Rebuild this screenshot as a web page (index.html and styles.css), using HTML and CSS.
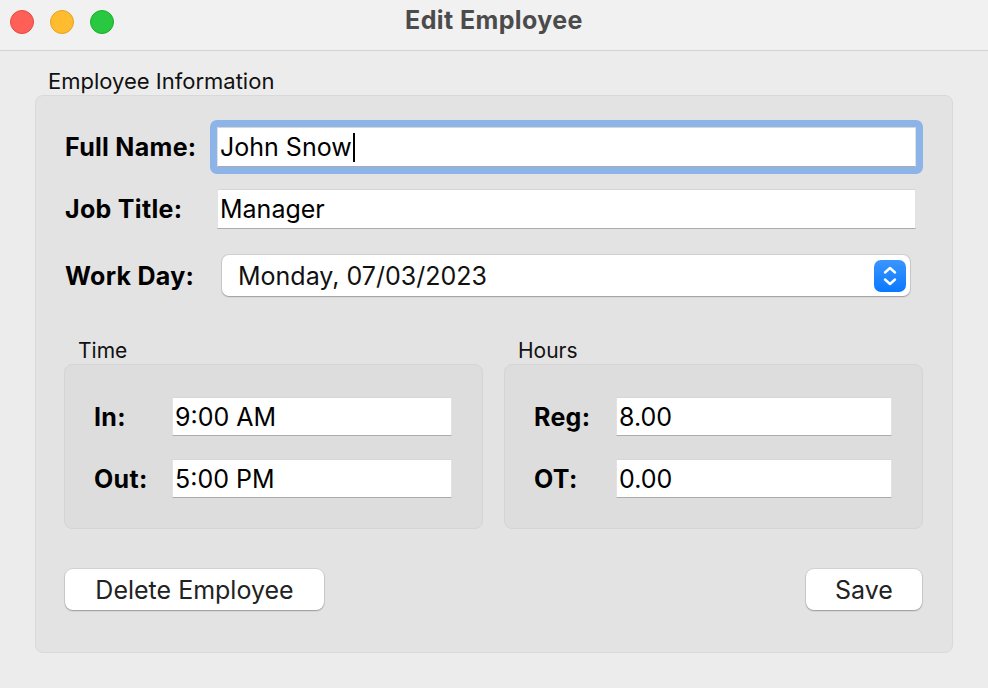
FILE: index.html
```html
<!DOCTYPE html>
<html>
<head>
<meta charset="utf-8">
<title>Edit Employee</title>
<link rel="stylesheet" href="styles.css">
</head>
<body>
<div class="window">
  <div class="titlebar">
    <div class="lights">
      <span class="light red"></span>
      <span class="light yellow"></span>
      <span class="light green"></span>
    </div>
    <div class="title">Edit Employee</div>
  </div>
  <div class="body">
    <div class="group-label">Employee Information</div>
    <div class="group">
      <div class="form">
        <div class="row row-name">
          <div class="label">Full Name:</div>
          <div class="focus-ring"><div class="field">John Snow<span class="caret"></span></div></div>
        </div>
        <div class="row row-title">
          <div class="label">Job Title:</div>
          <div class="field">Manager</div>
        </div>
        <div class="row row-day">
          <div class="label">Work Day:</div>
          <div class="popup">
            <span class="popup-text">Monday, 07/03/2023</span>
            <span class="stepper">
              <svg width="32" height="32" viewBox="0 0 32 32">
                <path d="M11 12.5 L16 8 L21 12.5" fill="none" stroke="#fff" stroke-width="2.4" stroke-linecap="round" stroke-linejoin="round"/>
                <path d="M11 19.5 L16 24 L21 19.5" fill="none" stroke="#fff" stroke-width="2.4" stroke-linecap="round" stroke-linejoin="round"/>
              </svg>
            </span>
          </div>
        </div>
      </div>
      <div class="subgroups">
        <div class="sub">
          <div class="sub-label">Time</div>
          <div class="sub-box sub-time">
            <div class="sub-label-cell">In:</div>
            <div class="field small">9:00 AM</div>
            <div class="sub-label-cell">Out:</div>
            <div class="field small">5:00 PM</div>
          </div>
        </div>
        <div class="sub">
          <div class="sub-label">Hours</div>
          <div class="sub-box sub-hours">
            <div class="sub-label-cell">Reg:</div>
            <div class="field small">8.00</div>
            <div class="sub-label-cell">OT:</div>
            <div class="field small">0.00</div>
          </div>
        </div>
      </div>
      <div class="buttons">
        <button class="btn btn-delete">Delete Employee</button>
        <button class="btn btn-save">Save</button>
      </div>
    </div>
  </div>
</div>
</body>
</html>
```
FILE: styles.css
```css
* { box-sizing: border-box; }
html, body {
  margin: 0;
  padding: 0;
  width: 988px;
  height: 688px;
  overflow: hidden;
  background: #ececec;
  font-family: Inter, "Noto Sans", "Liberation Sans", sans-serif;
  color: #111;
}
.window {
  width: 988px;
  height: 688px;
  display: flex;
  flex-direction: column;
}
.titlebar {
  height: 51px;
  background: #f1f1f1;
  border-bottom: 1px solid #d3d3d3;
  display: flex;
  align-items: center;
  position: relative;
}
.lights {
  display: flex;
  gap: 16px;
  padding-left: 10px;
  margin-top: -7px;
}
.light {
  width: 24px;
  height: 24px;
  border-radius: 50%;
  display: block;
}
.red { background: #fe5f57; border: 1px solid #e5493f; }
.yellow { background: #febc2e; border: 1px solid #e3a323; }
.green { background: #28c840; border: 1px solid #1eac2f; }
.title {
  position: absolute;
  left: 0;
  right: 0;
  top: 5px;
  text-align: center;
  font-weight: 700;
  font-size: 25px;
  line-height: 30px;
  color: #4b4b4b;
  letter-spacing: 0.4px;
}
.body {
  padding: 0 35px 0 35px;
}
.group-label {
  height: 44px;
  padding: 17px 0 0 13px;
  font-size: 22px;
  line-height: 26px;
  color: #111;
}
.group {
  width: 918px;
  height: 558px;
  background: #e3e3e3;
  border: 1px solid #d9d9d9;
  border-radius: 8px;
  padding: 31px 36px 0 29px;
}
.form {
  display: flex;
  flex-direction: column;
}
.row {
  display: grid;
  grid-template-columns: 152px 1fr;
  align-items: center;
}
.row-title { margin-top: 22px; }
.row-day { margin-top: 26px; }
.label {
  font-weight: 700;
  font-size: 25px;
  line-height: 30px;
  letter-spacing: 0.3px;
  color: #000;
}
.focus-ring {
  margin: -7px -7px;
  padding: 7px;
  background: #8db4e9;
  border-radius: 7px;
}
.field {
  height: 40px;
  background: #fff;
  border-top: 1px solid #d6d6d6;
  border-left: 1px solid #e2e2e2;
  border-right: 1px solid #e2e2e2;
  border-bottom: 1px solid #ababab;
  font-size: 25px;
  line-height: 38px;
  padding-left: 2px;
  color: #000;
  white-space: nowrap;
}
.caret {
  display: inline-block;
  width: 2px;
  height: 29px;
  background: #000;
  vertical-align: -6px;
  margin-left: 1px;
}
.popup {
  margin: 0 6px 0 5px;
  height: 41px;
  background: #fff;
  border-radius: 7px;
  box-shadow: 0 0 0 1px rgba(0,0,0,0.08), 0 1px 1.5px rgba(0,0,0,0.25);
  display: flex;
  align-items: center;
  justify-content: space-between;
  padding: 0 4px 0 16px;
}
.popup-text {
  font-size: 25px;
  color: #111;
}
.stepper {
  width: 32px;
  height: 32px;
  border-radius: 7px;
  background: linear-gradient(#3a95ff, #0a79fe);
  display: block;
}
.stepper svg { display: block; }
.subgroups {
  display: grid;
  grid-template-columns: 419px 419px;
  column-gap: 21px;
  margin-left: -1px;
  margin-top: 40px;
}
.sub-label {
  font-size: 21px;
  line-height: 24px;
  padding: 3px 0 0 14px;
  height: 28px;
  color: #111;
}
.sub-box {
  height: 165px;
  background: #dddddd;
  border: 1px solid #d5d5d5;
  border-radius: 8px;
  display: grid;
  align-content: start;
  align-items: center;
  row-gap: 23px;
  padding: 32px 30px 0 29px;
}
.sub-time { grid-template-columns: 78px 1fr; }
.sub-hours { grid-template-columns: 82px 1fr; }
.sub-label-cell {
  font-weight: 700;
  font-size: 25px;
  letter-spacing: 0.3px;
  color: #000;
}
.field.small { height: 39px; }
.buttons {
  display: flex;
  justify-content: space-between;
  margin-top: 40px;
  margin-right: -6px;
}
.btn {
  height: 41px;
  background: #fff;
  border: none;
  border-radius: 8px;
  box-shadow: 0 0 0 1px rgba(0,0,0,0.07), 0 1px 1.5px rgba(0,0,0,0.28);
  font-family: Inter, "Noto Sans", "Liberation Sans", sans-serif;
  font-size: 25px;
  color: #222;
  padding: 0;
}
.btn-delete { width: 259px; }
.btn-save { width: 116px; }
```
